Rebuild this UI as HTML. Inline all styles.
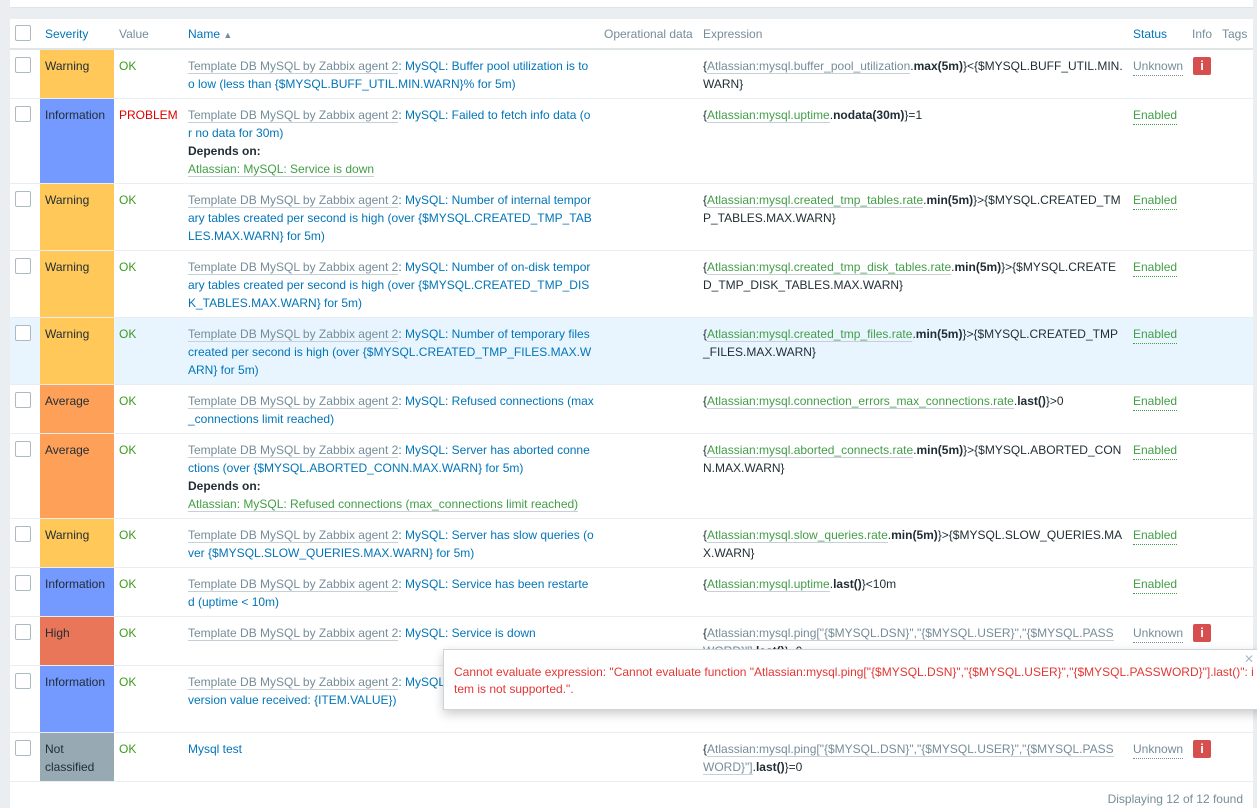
<!DOCTYPE html>
<html><head><meta charset="utf-8"><style>
*{box-sizing:border-box;margin:0;padding:0}
body{width:1257px;height:808px;background:#ebeef0;font-family:"Liberation Sans",Arial,sans-serif;font-size:12px;color:#1f2c33;position:relative;overflow:hidden;line-height:18px}
.top{position:absolute;left:10px;top:0;width:1243px;height:8px;background:#fff;border-bottom:1px solid #dfe4e7}
.panel{position:absolute;left:10px;top:19px;width:1243px;height:789px;background:#fff}
.hdr{position:absolute;left:10px;top:19px;width:1243px;height:31px;border-bottom:2px solid #dfe4e7}
.hdr span{position:absolute;top:6px;color:#768d99}
.hdr .b{color:#0275b8}
.row{position:absolute;left:10px;width:1243px;border-bottom:1px solid #ebeef0}
.cb{position:absolute;left:5px;top:7px;width:16px;height:16px;border:1px solid #acbbc2;border-radius:2px;background:#fff}
.sev{position:absolute;left:30px;top:0;bottom:0;width:74px;padding:7px 5px;color:#1f2c33}
.val{position:absolute;left:109px;top:7px}
.nm{position:absolute;left:178px;top:7px;width:420px;color:#0275b8;white-space:nowrap}
.ex{position:absolute;left:693px;top:7px;width:425px;white-space:nowrap}
.st{position:absolute;left:1123px;top:7px;border-bottom:1px dotted}
.inf{position:absolute;left:1183px;top:7px;width:18px;height:18px;background:#d64e4e;border-radius:2px;color:#fff;font-weight:bold;text-align:center;line-height:18px;font-size:13px}
.t{color:#768d99;border-bottom:1px solid #c6d0d6}
.g{color:#429e47;border-bottom:1px solid #c6d0d6}
.gy{color:#768d99;border-bottom:1px solid #c6d0d6}
.ok{color:#3c9c1c}
.pr{color:#dc0000}
.unk{color:#768d99;border-color:#768d99}
.en{color:#429e47;border-color:#429e47}
b{font-weight:bold}
.W{background:#ffc859}.I{background:#7499ff}.A{background:#ffa059}.H{background:#e97659}.N{background:#97aab3}
.pop{position:absolute;left:443px;top:649px;width:820px;height:61px;background:#fff;border:1px solid #ccd5d9;box-shadow:0 4px 10px rgba(0,0,0,.2);color:#e33734;padding:14px 0 0 10px;line-height:17px}
.x{position:absolute;right:8px;top:1px;color:#acbbc2;font-size:12px}
.foot{position:absolute;right:14px;top:790px;color:#768d99}
</style></head><body>
<div class="top"></div>
<div class="panel"></div>
<div class="hdr">
<div class="cb" style="top:6px"></div>
<span class="b" style="left:35px">Severity</span>
<span style="left:109px">Value</span>
<span class="b" style="left:178px">Name <span style="position:static;font-size:9px;color:#768d99">&#9650;</span></span>
<span style="left:594px">Operational data</span>
<span style="left:693px">Expression</span>
<span class="b" style="left:1123px">Status</span>
<span style="left:1182px">Info</span>
<span style="left:1212px">Tags</span>
</div>

<div class="row" style="top:50px;height:49px"><div class="cb"></div><div class="sev W">Warning</div><div class="val ok">OK</div>
<div class="nm"><span class="t">Template DB MySQL by Zabbix agent 2</span>: MySQL: Buffer pool utilization is to<br>o low (less than {$MYSQL.BUFF_UTIL.MIN.WARN}% for 5m)</div>
<div class="ex">{<span class="gy">Atlassian:mysql.buffer_pool_utilization</span>.<b>max(5m)</b>}&lt;{$MYSQL.BUFF_UTIL.MIN.<br>WARN}</div>
<div class="st unk">Unknown</div><div class="inf">i</div></div>

<div class="row" style="top:99px;height:85px"><div class="cb"></div><div class="sev I">Information</div><div class="val pr">PROBLEM</div>
<div class="nm"><span class="t">Template DB MySQL by Zabbix agent 2</span>: MySQL: Failed to fetch info data (o<br>r no data for 30m)<br><b style="color:#1f2c33">Depends on:</b><br><span class="g">Atlassian: MySQL: Service is down</span></div>
<div class="ex">{<span class="g">Atlassian:mysql.uptime</span>.<b>nodata(30m)</b>}=1</div>
<div class="st en">Enabled</div></div>

<div class="row" style="top:184px;height:67px"><div class="cb"></div><div class="sev W">Warning</div><div class="val ok">OK</div>
<div class="nm"><span class="t">Template DB MySQL by Zabbix agent 2</span>: MySQL: Number of internal tempor<br>ary tables created per second is high (over {$MYSQL.CREATED_TMP_TAB<br>LES.MAX.WARN} for 5m)</div>
<div class="ex">{<span class="g">Atlassian:mysql.created_tmp_tables.rate</span>.<b>min(5m)</b>}&gt;{$MYSQL.CREATED_TM<br>P_TABLES.MAX.WARN}</div>
<div class="st en">Enabled</div></div>

<div class="row" style="top:251px;height:67px"><div class="cb"></div><div class="sev W">Warning</div><div class="val ok">OK</div>
<div class="nm"><span class="t">Template DB MySQL by Zabbix agent 2</span>: MySQL: Number of on-disk tempor<br>ary tables created per second is high (over {$MYSQL.CREATED_TMP_DIS<br>K_TABLES.MAX.WARN} for 5m)</div>
<div class="ex">{<span class="g">Atlassian:mysql.created_tmp_disk_tables.rate</span>.<b>min(5m)</b>}&gt;{$MYSQL.CREATE<br>D_TMP_DISK_TABLES.MAX.WARN}</div>
<div class="st en">Enabled</div></div>

<div class="row" style="top:318px;height:67px;background:#e8f5ff"><div class="cb"></div><div class="sev W">Warning</div><div class="val ok">OK</div>
<div class="nm"><span class="t">Template DB MySQL by Zabbix agent 2</span>: MySQL: Number of temporary files<br>created per second is high (over {$MYSQL.CREATED_TMP_FILES.MAX.W<br>ARN} for 5m)</div>
<div class="ex">{<span class="g">Atlassian:mysql.created_tmp_files.rate</span>.<b>min(5m)</b>}&gt;{$MYSQL.CREATED_TMP<br>_FILES.MAX.WARN}</div>
<div class="st en">Enabled</div></div>

<div class="row" style="top:385px;height:49px"><div class="cb"></div><div class="sev A">Average</div><div class="val ok">OK</div>
<div class="nm"><span class="t">Template DB MySQL by Zabbix agent 2</span>: MySQL: Refused connections (max<br>_connections limit reached)</div>
<div class="ex">{<span class="g">Atlassian:mysql.connection_errors_max_connections.rate</span>.<b>last()</b>}&gt;0</div>
<div class="st en">Enabled</div></div>

<div class="row" style="top:434px;height:85px"><div class="cb"></div><div class="sev A">Average</div><div class="val ok">OK</div>
<div class="nm"><span class="t">Template DB MySQL by Zabbix agent 2</span>: MySQL: Server has aborted conne<br>ctions (over {$MYSQL.ABORTED_CONN.MAX.WARN} for 5m)<br><b style="color:#1f2c33">Depends on:</b><br><span class="g">Atlassian: MySQL: Refused connections (max_connections limit reached)</span></div>
<div class="ex">{<span class="g">Atlassian:mysql.aborted_connects.rate</span>.<b>min(5m)</b>}&gt;{$MYSQL.ABORTED_CON<br>N.MAX.WARN}</div>
<div class="st en">Enabled</div></div>

<div class="row" style="top:519px;height:49px"><div class="cb"></div><div class="sev W">Warning</div><div class="val ok">OK</div>
<div class="nm"><span class="t">Template DB MySQL by Zabbix agent 2</span>: MySQL: Server has slow queries (o<br>ver {$MYSQL.SLOW_QUERIES.MAX.WARN} for 5m)</div>
<div class="ex">{<span class="g">Atlassian:mysql.slow_queries.rate</span>.<b>min(5m)</b>}&gt;{$MYSQL.SLOW_QUERIES.MA<br>X.WARN}</div>
<div class="st en">Enabled</div></div>

<div class="row" style="top:568px;height:49px"><div class="cb"></div><div class="sev I">Information</div><div class="val ok">OK</div>
<div class="nm"><span class="t">Template DB MySQL by Zabbix agent 2</span>: MySQL: Service has been restarte<br>d (uptime &lt; 10m)</div>
<div class="ex">{<span class="g">Atlassian:mysql.uptime</span>.<b>last()</b>}&lt;10m</div>
<div class="st en">Enabled</div></div>

<div class="row" style="top:617px;height:49px"><div class="cb"></div><div class="sev H">High</div><div class="val ok">OK</div>
<div class="nm"><span class="t">Template DB MySQL by Zabbix agent 2</span>: MySQL: Service is down</div>
<div class="ex">{<span class="gy">Atlassian:mysql.ping["{$MYSQL.DSN}","{$MYSQL.USER}","{$MYSQL.PASS<br>WORD}"]</span>.<b>last()</b>}=0</div>
<div class="st unk">Unknown</div><div class="inf">i</div></div>

<div class="row" style="top:666px;height:67px"><div class="cb"></div><div class="sev I">Information</div><div class="val ok">OK</div>
<div class="nm"><span class="t">Template DB MySQL by Zabbix agent 2</span>: MySQL: Version has changed (new<br>version value received: {ITEM.VALUE})</div>
<div class="ex">{<span class="gy">Atlassian:mysql.version["{$MYSQL.DSN}","{$MYSQ<br>L.USER}","{$MYSQL.PASSWORD}"]</span>.<b>strlen()</b>}&gt;0</div>
<div class="st en">Enabled</div></div>

<div class="row" style="top:733px;height:49px"><div class="cb"></div><div class="sev N">Not<br>classified</div><div class="val ok">OK</div>
<div class="nm">Mysql test</div>
<div class="ex">{<span class="gy">Atlassian:mysql.ping["{$MYSQL.DSN}","{$MYSQL.USER}","{$MYSQL.PASS<br>WORD}"]</span>.<b>last()</b>}=0</div>
<div class="st unk">Unknown</div><div class="inf">i</div></div>

<div class="pop"><span class="x">&#10005;</span>Cannot evaluate expression: "Cannot evaluate function "Atlassian:mysql.ping["{$MYSQL.DSN}","{$MYSQL.USER}","{$MYSQL.PASSWORD}"].last()": i<br>tem is not supported.".</div>
<div class="foot">Displaying 12 of 12 found</div>
</body></html>
